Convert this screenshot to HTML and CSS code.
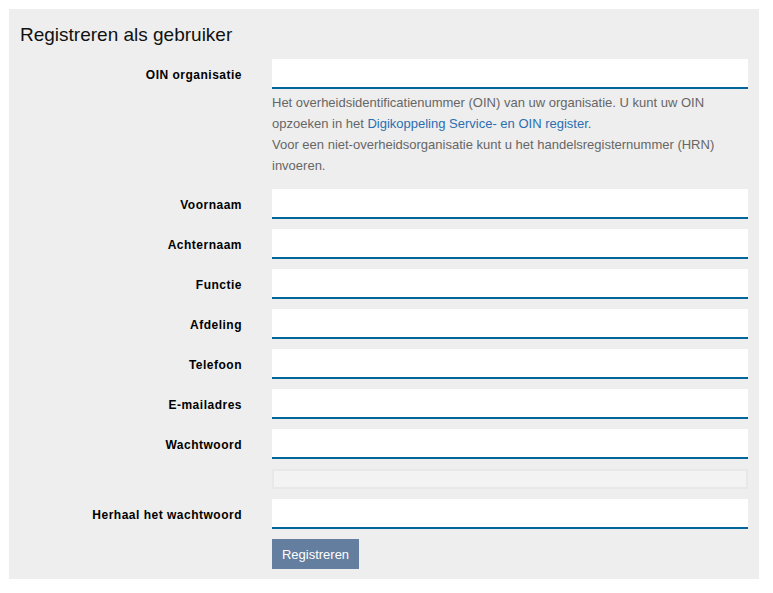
FILE: index.html
```html
<!DOCTYPE html>
<html lang="nl">
<head>
<meta charset="utf-8">
<title>Registreren als gebruiker</title>
<link rel="stylesheet" href="styles.css">
</head>
<body>
<div class="panel">
  <h1 class="title">Registreren als gebruiker</h1>
  <form class="form">
    <label class="label" for="oin">OIN organisatie</label>
    <div class="field">
      <input class="input" id="oin" type="text">
      <p class="help">Het overheidsidentificatienummer (OIN) van uw organisatie. U kunt uw OIN opzoeken in het <a href="#" class="link">Digikoppeling Service- en OIN register</a>.<br>Voor een niet-overheidsorganisatie kunt u het handelsregisternummer (HRN) invoeren.</p>
    </div>

    <label class="label" for="voornaam">Voornaam</label>
    <input class="input" id="voornaam" type="text">

    <label class="label" for="achternaam">Achternaam</label>
    <input class="input" id="achternaam" type="text">

    <label class="label" for="functie">Functie</label>
    <input class="input" id="functie" type="text">

    <label class="label" for="afdeling">Afdeling</label>
    <input class="input" id="afdeling" type="text">

    <label class="label" for="telefoon">Telefoon</label>
    <input class="input" id="telefoon" type="text">

    <label class="label" for="email">E-mailadres</label>
    <input class="input" id="email" type="text">

    <label class="label" for="ww">Wachtwoord</label>
    <input class="input" id="ww" type="password">

    <div class="meter"></div>

    <label class="label" for="ww2">Herhaal het wachtwoord</label>
    <input class="input" id="ww2" type="password">

    <div class="actions">
      <button class="button" type="button">Registreren</button>
    </div>
  </form>
</div>
</body>
</html>
```

FILE: styles.css
```css
html, body {
  margin: 0;
  padding: 0;
  background: #ffffff;
}
body {
  padding: 9px 14px 14px 9px;
  font-family: "Liberation Sans", Arial, sans-serif;
}
.panel {
  background: #eeeeee;
  width: 750px;
  box-sizing: border-box;
  padding: 14px 11px 10px 11px;
}
.title {
  margin: 0 0 12px 0;
  font-size: 19px;
  line-height: 24px;
  font-weight: normal;
  color: #111;
}
.form {
  display: grid;
  grid-template-columns: 222px 476px;
  column-gap: 30px;
  row-gap: 10px;
}
.label {
  grid-column: 1;
  justify-self: end;
  align-self: start;
  height: 30px;
  line-height: 33px;
  font-size: 12px;
  font-weight: bold;
  letter-spacing: 0.5px;
  color: #000;
}
.field {
  grid-column: 2;
  display: flex;
  flex-direction: column;
}
.input {
  grid-column: 2;
  display: block;
  width: 476px;
  height: 30px;
  box-sizing: border-box;
  margin: 0;
  border: 0;
  border-bottom: 2px solid #006699;
  background: #ffffff;
  padding: 0 8px;
  font: inherit;
  outline: none;
}
.help {
  margin: 3px 0 3px 0;
  font-size: 13px;
  line-height: 21px;
  color: #666666;
}
.link {
  color: #2a6eb0;
  text-decoration: none;
}
.meter {
  grid-column: 2;
  height: 20px;
  box-sizing: border-box;
  border: 2px solid #e8e8e8;
  background: #f3f3f3;
}
.actions {
  grid-column: 2;
}
.button {
  display: block;
  width: 87px;
  height: 30px;
  border: 0;
  margin: 0;
  padding: 0;
  background: #637e9e;
  color: #ffffff;
  font-family: "Liberation Sans", Arial, sans-serif;
  font-size: 13px;
  cursor: pointer;
}
```
